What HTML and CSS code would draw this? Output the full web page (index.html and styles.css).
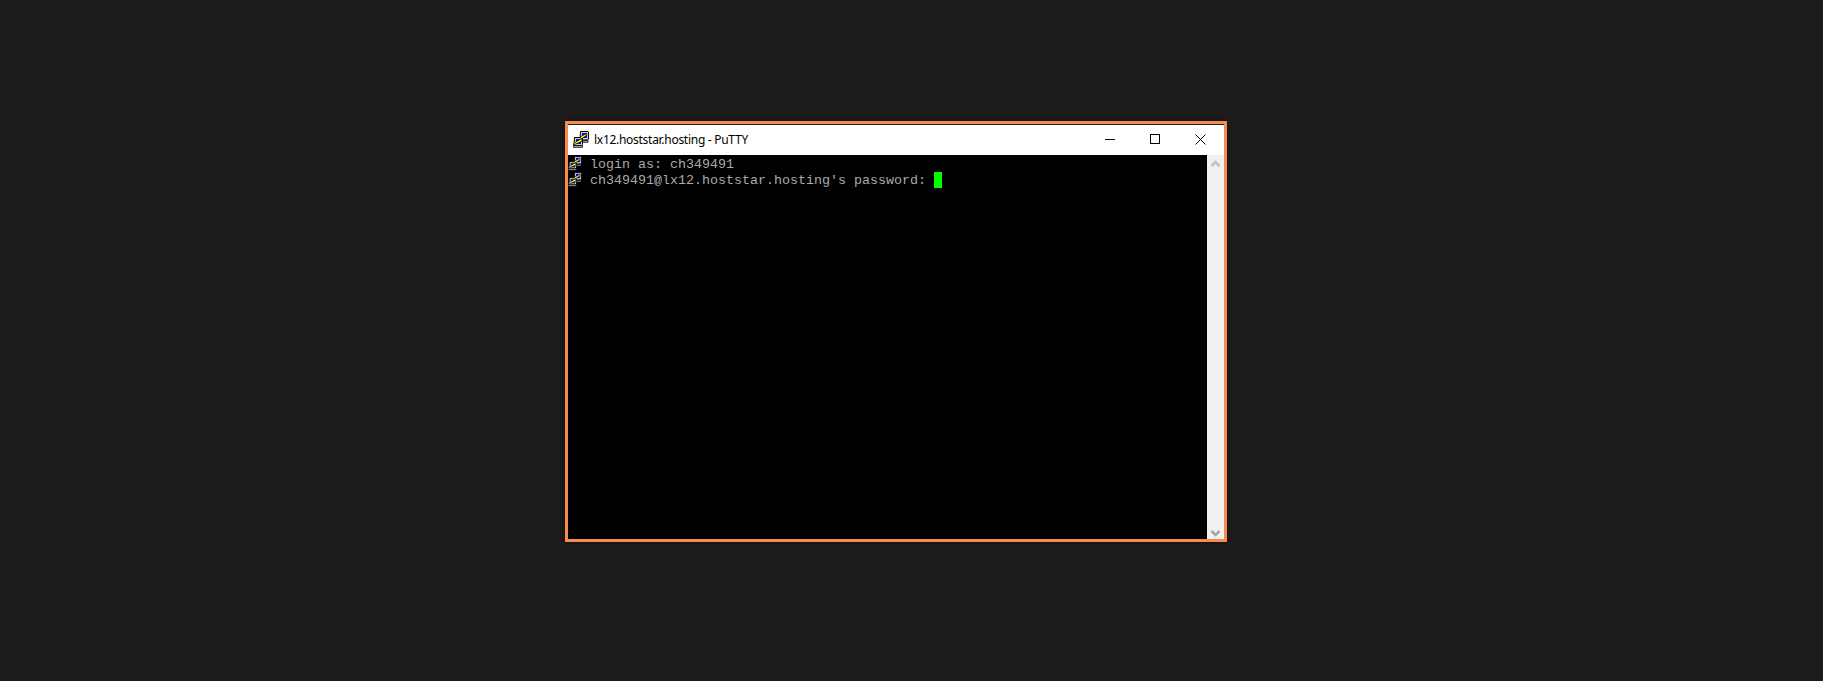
FILE: index.html
```html
<!DOCTYPE html>
<html lang="en">
<head>
<meta charset="utf-8">
<title>PuTTY</title>
<link rel="stylesheet" href="styles.css">
</head>
<body>
<svg class="defs" width="0" height="0" aria-hidden="true">
  <symbol id="putty" viewBox="0 0 16 17">
    <path d="M7.500 .5h7.500l.5.5v7l-1 1h-7l-.5-.5z" fill="#d0d0d0" stroke="#000"/>
    <rect x="9" y="2" width="5" height="5" fill="#0808e8"/>
    <path d="M6.500 9.500h8.500v1.800h-9z" fill="#b8b8b8" stroke="#000" stroke-width=".8"/>
    <path d="M1.500 6.500h7.500l.5.5v6.500l-1 1h-7l-.5-.5z" fill="#d0d0d0" stroke="#000"/>
    <rect x="3" y="8" width="5" height="5" fill="#0808e8"/>
    <path d="M.5 14.500h9v1.800h-9.200z" fill="#b8b8b8" stroke="#000" stroke-width=".8"/>
    <path d="M13.500 2.500l-6.500 3.500 1.500 1.500-7.500 4.500-.5 2 9-4-1.500-1.800 6-4.200z" fill="#ffff00" stroke="#000" stroke-width=".7"/>
  </symbol>
</svg>
<div class="window">
  <div class="titlebar">
    <svg class="title-icon"><use href="#putty"/></svg>
    <span class="title">lx12.hoststar.hosting - PuTTY</span>
    <div class="controls">
      <svg class="ctl ctl-min" width="10" height="10" viewBox="0 0 10 10"><path d="M0 5.500h10" stroke="#000"/></svg>
      <svg class="ctl ctl-max" width="10" height="10" viewBox="0 0 10 10"><rect x=".5" y=".5" width="9" height="9" fill="none" stroke="#000"/></svg>
      <svg class="ctl ctl-close" width="11" height="11" viewBox="0 0 11 11"><path d="M.5 .5l10 10M10.500 .5l-10 10" stroke="#000" fill="none"/></svg>
    </div>
  </div>
  <div class="body">
    <div class="terminal">
      <div class="line"><svg class="line-icon"><use href="#putty"/></svg><span class="text">login as: ch349491</span></div>
      <div class="line"><svg class="line-icon"><use href="#putty"/></svg><span class="text">ch349491@lx12.hoststar.hosting's password: </span><span class="cursor"></span></div>
    </div>
    <div class="scrollbar">
      <svg class="arrow" width="17" height="17" viewBox="0 0 17 17"><path d="M4.500 11l4-4 4 4" fill="none" stroke="#c0c0c0" stroke-width="2.500"/></svg>
      <svg class="arrow" width="17" height="17" viewBox="0 0 17 17"><path d="M4.500 9l4 4 4-4" fill="none" stroke="#a6a6a6" stroke-width="2.500"/></svg>
    </div>
  </div>
</div>
</body>
</html>
```
FILE: styles.css
```css
html, body {
  margin: 0;
  height: 100%;
}
body {
  background: #1c1c1c;
  padding: 121px 0 0 565px;
  box-sizing: border-box;
  overflow: hidden;
}
.defs {
  position: absolute;
}
.window {
  width: 662px;
  height: 421px;
  box-sizing: border-box;
  border: 3px solid #f58b4c;
  display: flex;
  flex-direction: column;
  box-shadow: 0 0 4px rgba(0, 0, 0, .5);
}
.titlebar {
  height: 31px;
  box-sizing: border-box;
  border-top: 1px solid #1c1c1c;
  background: #fff;
  display: flex;
  align-items: center;
  padding: 0 0 2px 5px;
}
.title-icon {
  width: 16px;
  height: 17px;
  flex: none;
}
.title {
  margin-left: 5px;
  font: 12px "Noto Sans", "Open Sans", sans-serif;
  letter-spacing: -.28px;
  color: #000;
  white-space: nowrap;
}
.controls {
  margin-left: auto;
  display: flex;
  align-items: center;
}
.ctl {
  display: block;
}
.ctl-min {
  margin-right: 35px;
}
.ctl-max {
  margin-right: 35px;
}
.ctl-close {
  margin-right: 18px;
}
.body {
  flex: 1;
  display: flex;
  min-height: 0;
}
.terminal {
  flex: 1;
  background: #000;
  padding-top: 1px;
}
.line {
  height: 16px;
  display: flex;
  align-items: center;
}
.line-icon {
  width: 14px;
  height: 15px;
  flex: none;
  margin-right: 8px;
  margin-top: -1px;
}
.text {
  font: 13.333px/16px "Liberation Mono", monospace;
  color: #aaa;
  white-space: pre;
  padding-top: 2px;
}
.cursor {
  width: 8px;
  height: 16px;
  background: #00ff00;
}
.scrollbar {
  width: 17px;
  flex: none;
  background: #f0f0f0;
  display: flex;
  flex-direction: column;
  justify-content: space-between;
}
.arrow {
  display: block;
}
```
